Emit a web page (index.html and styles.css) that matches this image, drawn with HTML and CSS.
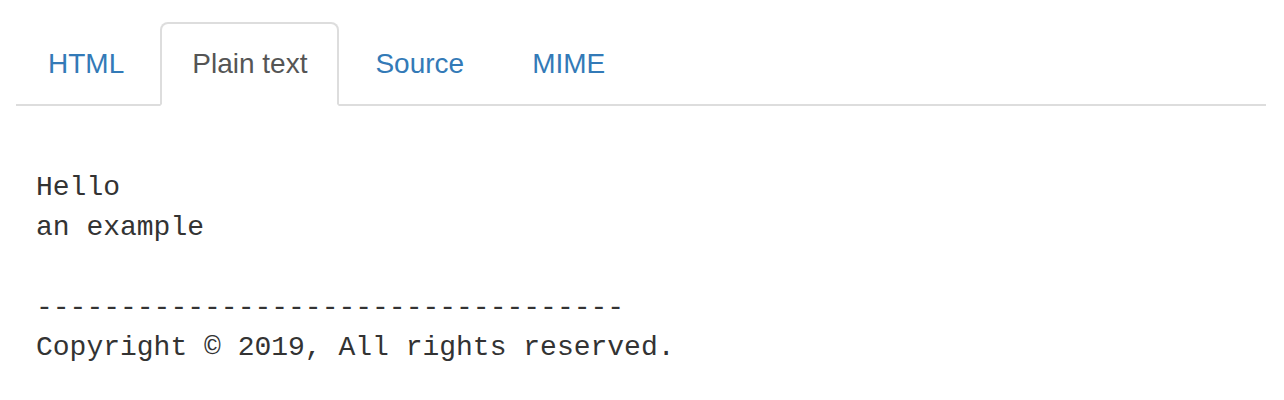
FILE: index.html
```html
<!DOCTYPE html>
<html>
<head>
<meta charset="utf-8">
<link rel="stylesheet" href="styles.css">
</head>
<body>
<div class="page">
  <ul class="tabs">
    <li class="tab"><a href="#">HTML</a></li>
    <li class="tab active"><a href="#">Plain text</a></li>
    <li class="tab"><a href="#">Source</a></li>
    <li class="tab"><a href="#">MIME</a></li>
  </ul>
  <div class="content">
<pre class="plain">Hello
an example

-----------------------------------
Copyright © 2019, All rights reserved.</pre>
  </div>
</div>
</body>
</html>
```
FILE: styles.css
```css
html, body {
  margin: 0;
  padding: 0;
  background: #fff;
}
.page {
  padding: 22px 18px 0 16px;
  font-family: "Liberation Sans", Arial, sans-serif;
}
.tabs {
  list-style: none;
  margin: 0;
  padding: 0;
  display: flex;
  border-bottom: 2px solid #ddd;
}
.tab {
  margin: 0 4px -2px 0;
}
.tab a {
  display: block;
  padding: 20px 30px;
  font-size: 28px;
  line-height: 40px;
  color: #337ab7;
  text-decoration: none;
  border: 2px solid transparent;
  border-radius: 8px 8px 0 0;
}
.tab.active a {
  color: #555;
  background: #fff;
  border-color: #ddd #ddd transparent #ddd;
}
.content {
  padding: 62px 0 0 20px;
}
.plain {
  margin: 0;
  font-family: "Liberation Mono", "Courier New", monospace;
  font-size: 28px;
  line-height: 40px;
  color: #333;
}
```
